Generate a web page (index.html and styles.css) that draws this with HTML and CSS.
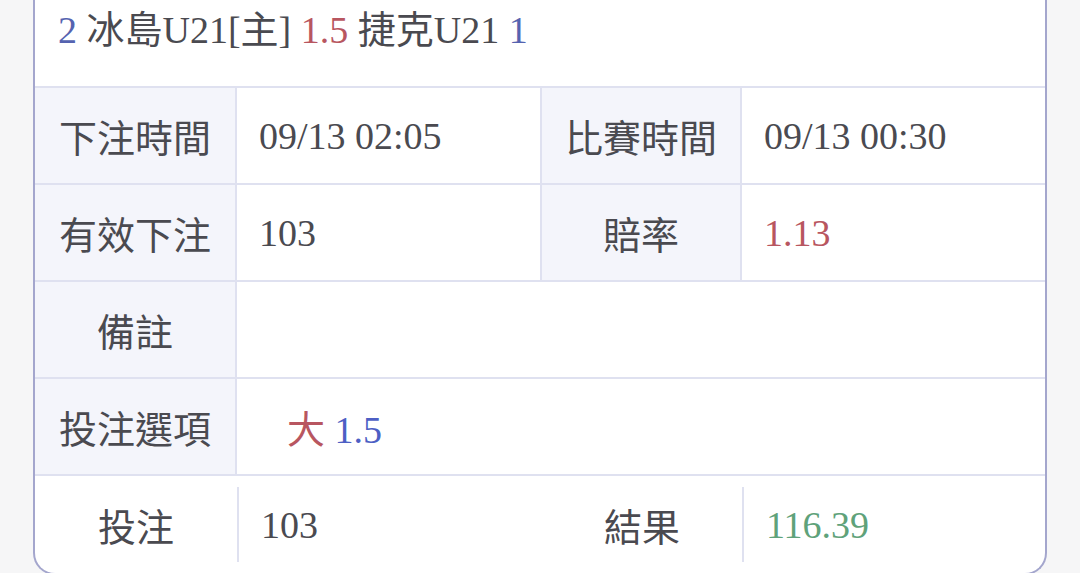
FILE: index.html
```html
<!DOCTYPE html>
<html lang="zh-Hant">
<head>
<meta charset="utf-8">
<title>注單</title>
<link rel="stylesheet" href="styles.css">
</head>
<body>
<div class="card">
  <div class="title">
    <span class="blue">2</span> 冰島U21[主] <span class="red">1.5</span> 捷克U21 <span class="blue">1</span>
  </div>
  <div class="grid">
    <div class="cell label">下注時間</div>
    <div class="cell value">09/13 02:05</div>
    <div class="cell label">比賽時間</div>
    <div class="cell value last">09/13 00:30</div>

    <div class="cell label">有效下注</div>
    <div class="cell value">103</div>
    <div class="cell label">賠率</div>
    <div class="cell value last"><span class="red">1.13</span></div>

    <div class="cell label">備註</div>
    <div class="cell value wide last"></div>

    <div class="cell label">投注選項</div>
    <div class="cell value wide last"><span class="pick"><span class="red">大</span> <span class="blue2">1.5</span></span></div>

    <div class="cell foot">投注</div>
    <div class="cell foot fvalue">103</div>
    <div class="cell foot">結果</div>
    <div class="cell foot fvalue"><span class="green">116.39</span></div>
  </div>
</div>
</body>
</html>
```

FILE: styles.css
```css
html, body {
  margin: 0;
  padding: 0;
  background: #f6f6f7;
}
body {
  font-family: "Liberation Serif", "Noto Sans CJK TC", serif;
  color: #4a4a50;
  width: 1080px;
  height: 573px;
  overflow: hidden;
}
.card {
  margin: 0 33px;
  width: 1010px;
  background: #ffffff;
  border: 2px solid #a4a6cd;
  border-top: none;
  border-radius: 0 0 22px 22px;
}
.title {
  height: 86px;
  box-sizing: border-box;
  padding: 8px 0 0 23px;
  font-size: 38px;
  line-height: 44px;
  white-space: nowrap;
}
.blue { color: #5563b0; }
.blue2 { color: #4d5fc4; }
.red { color: #b85660; }
.green { color: #5fa27a; }
.grid {
  display: grid;
  grid-template-columns: 202px 305px 200px 1fr;
  grid-auto-rows: 97px;
  border-top: 2px solid #dfe1f0;
}
.cell {
  display: flex;
  align-items: center;
  font-size: 38px;
  box-sizing: border-box;
  border-bottom: 2px solid #dfe1f0;
  border-right: 2px solid #dfe1f0;
  white-space: nowrap;
}
.label {
  justify-content: center;
  background: #f4f5fb;
}
.value {
  padding-left: 22px;
}
.last { border-right: none; }
.wide { grid-column: span 3; }
.pick { margin-left: 28px; }
.foot {
  border: none;
  margin: 11px 0;
  justify-content: center;
}
.fvalue {
  justify-content: flex-start;
  padding-left: 22px;
  border-left: 2px solid #dfe1f0;
}
```
